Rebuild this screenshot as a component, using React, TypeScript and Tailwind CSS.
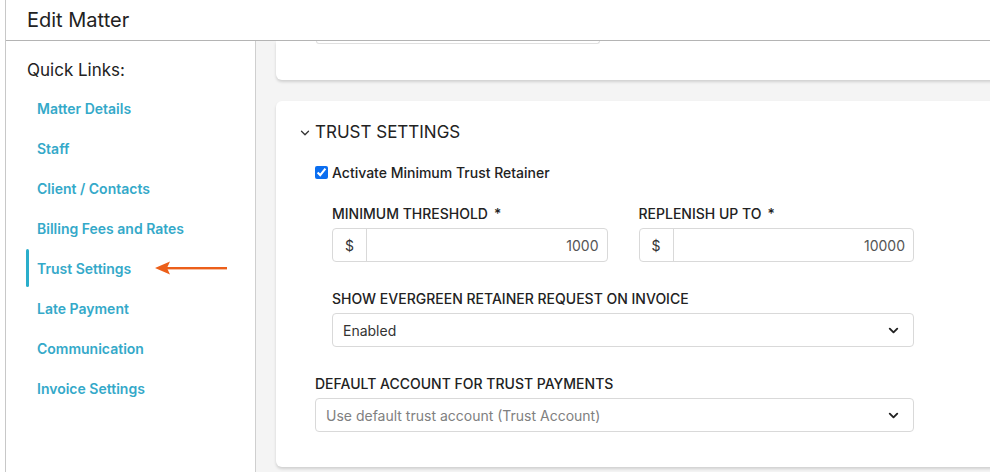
import { ChevronDown } from 'lucide-react';

const links = [
  'Matter Details',
  'Staff',
  'Client / Contacts',
  'Billing Fees and Rates',
  'Trust Settings',
  'Late Payment',
  'Communication',
  'Invoice Settings',
];

function MoneyInput({ value }: { value: string }) {
  return (
    <div className="flex h-[34px] w-full rounded-[4px] border border-[#d9d9d9] bg-white text-[14px]">
      <div className="flex w-[34px] items-center justify-center border-r border-[#d9d9d9] text-[#333]">$</div>
      <div className="flex flex-1 items-center justify-end pr-[8px] text-[#555]">{value}</div>
    </div>
  );
}

function Label({ text, required }: { text: string; required?: boolean }) {
  return (
    <div className="flex h-[20px] items-center text-[14px] font-medium text-[#222]">
      {text}
      {required && <span className="ml-[6px]">*</span>}
    </div>
  );
}

export default function App() {
  return (
    <div className="h-[472px] w-[990px] overflow-hidden bg-white" style={{ fontFamily: 'Inter, "Noto Sans", sans-serif' }}>
      <div className="ml-[5px] flex h-full flex-col border-l border-[#c8c8c8]">
        {/* Header */}
        <div className="flex h-[41px] shrink-0 items-center border-b border-[#b4b4b4] pl-[21px] text-[20px] text-[#222]">
          Edit Matter
        </div>

        <div className="flex min-h-0 flex-1">
          {/* Sidebar */}
          <div className="w-[250px] shrink-0 border-r border-[#cfcfcf] bg-white pt-[17px]">
            <div className="pl-[21px] text-[17px] leading-[24px] text-[#222]">Quick Links:</div>
            <ul className="mt-[6px]">
              {links.map((l) => {
                const active = l === 'Trust Settings';
                return (
                  <li key={l} className="relative flex h-[40px] items-center pl-[31px]">
                    {active && <span className="absolute left-[20px] top-[1px] h-[38px] w-[3px] rounded-[2px] bg-[#2aaecb]" />}
                    <span className="text-[14px] font-semibold text-[#34a9c9]">{l}</span>
                    {active && (
                      <svg className="absolute left-[149px] top-[13px]" width="72" height="14" viewBox="0 0 72 14">
                        <path d="M0 7 L15 0.5 L12 7 L15 13.5 Z" fill="#ec5f1a" />
                        <rect x="10" y="6" width="62" height="2.4" fill="#ec5f1a" />
                      </svg>
                    )}
                  </li>
                );
              })}
            </ul>
          </div>

          {/* Content */}
          <div className="min-w-0 flex-1 overflow-hidden bg-[#f4f4f4] pl-[20px]">
            {/* Previous card (scrolled) */}
            <div className="h-[39px] w-[760px] rounded-b-[6px] bg-white pl-[40px] shadow-[0_2px_3px_rgba(0,0,0,0.15)]">
              <div className="h-[3px] w-[284px] rounded-b-[4px] border-x border-b border-[#e0e0e0]" />
            </div>

            {/* Trust settings card */}
            <div className="mt-[21px] h-[366px] w-[760px] rounded-[6px] bg-white pl-[22px] pt-[20px] shadow-[0_2px_3px_rgba(0,0,0,0.15)]">
              <div className="flex h-[24px] items-center gap-[3px] text-[17px] text-[#222]">
                <ChevronDown size={14} strokeWidth={2.2} className="text-[#333]" />
                <span>TRUST SETTINGS</span>
              </div>

              <div className="ml-[17px] mt-[17px] flex h-[20px] items-center gap-[4px] text-[14px] font-medium text-[#222]">
                <input type="checkbox" checked readOnly className="m-0 h-[13px] w-[13px] accent-[#0b6ef0]" />
                <span>Activate Minimum Trust Retainer</span>
              </div>

              <div className="ml-[34px] w-[582px]">
                <div className="mt-[21px] flex gap-[31px]">
                  <div className="flex-1">
                    <Label text="MINIMUM THRESHOLD" required />
                    <div className="mt-[5px]">
                      <MoneyInput value="1000" />
                    </div>
                  </div>
                  <div className="flex-1">
                    <Label text="REPLENISH UP TO" required />
                    <div className="mt-[5px]">
                      <MoneyInput value="10000" />
                    </div>
                  </div>
                </div>

                <div className="mt-[26px]">
                  <Label text="SHOW EVERGREEN RETAINER REQUEST ON INVOICE" />
                </div>
                <div className="mt-[5px] flex h-[34px] items-center justify-between rounded-[4px] border border-[#d9d9d9] pl-[10px] pr-[12px] text-[14px] text-[#333]">
                  <span>Enabled</span>
                  <ChevronDown size={15} strokeWidth={3} className="text-[#222]" />
                </div>
              </div>

              <div className="ml-[17px] w-[599px]">
                <div className="mt-[26px]">
                  <Label text="DEFAULT ACCOUNT FOR TRUST PAYMENTS" />
                </div>
                <div className="mt-[5px] flex h-[34px] items-center justify-between rounded-[4px] border border-[#d9d9d9] pl-[10px] pr-[12px] text-[14px] text-[#808080]">
                  <span>Use default trust account (Trust Account)</span>
                  <ChevronDown size={15} strokeWidth={3} className="text-[#222]" />
                </div>
              </div>
            </div>
          </div>
        </div>
      </div>
    </div>
  );
}
